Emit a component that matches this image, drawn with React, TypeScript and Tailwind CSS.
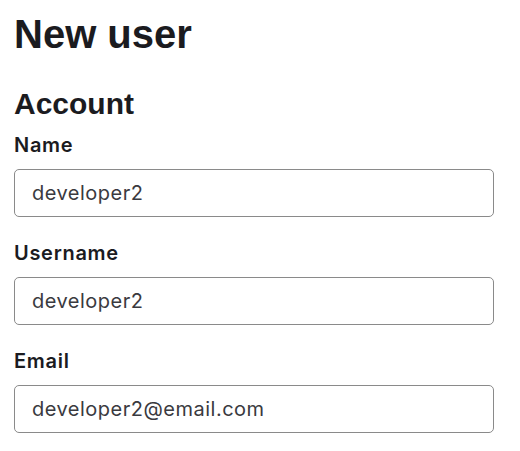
import React, { useState } from 'react';

const Field: React.FC<{ label: string; value: string; type?: string }> = ({ label, value, type = 'text' }) => {
    const [val, setVal] = useState(value);
    return (
        <div className="mt-6 first:mt-[14px]">
            <label className="block text-[20px] leading-6 tracking-[0.7px] font-semibold text-[#1b1b1f] font-[family-name:Inter,sans-serif]">
                {label}
            </label>
            <input
                type={type}
                value={val}
                onChange={(e) => setVal(e.target.value)}
                className="mt-3 block w-[480px] h-[48px] px-[17px] border border-[#8a8a8a] rounded-[5px] bg-white text-[20px] tracking-[0.5px] text-[#3a3a40] font-[family-name:Inter,sans-serif] outline-none"
            />
        </div>
    );
};

export default function App() {
    return (
        <div className="min-h-screen bg-white pl-[14px] pt-[14px]">
            <h1 className="text-[40px] leading-[40px] font-bold text-[#1b1b1f] font-[family-name:'Liberation_Sans',Arial,sans-serif]">
                New user
            </h1>
            <h2 className="mt-[35px] text-[30px] leading-[30px] font-bold text-[#1b1b1f] font-[family-name:'Liberation_Sans',Arial,sans-serif]">
                Account
            </h2>
            <form onSubmit={(e) => e.preventDefault()}>
                <Field label="Name" value="developer2" />
                <Field label="Username" value="developer2" />
                <Field label="Email" value="developer2@email.com" type="email" />
            </form>
        </div>
    );
}
